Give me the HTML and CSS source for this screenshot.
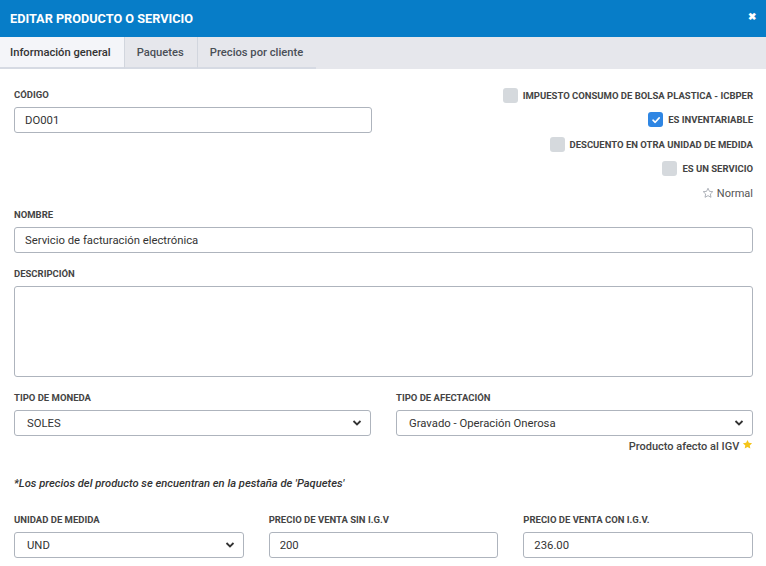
FILE: index.html
```html
<!DOCTYPE html>
<html>
<head>
    <meta charset="UTF-8">
    <title>Editar producto o servicio</title>
    <link rel="stylesheet" href="styles.css">
</head>
<body>
    <div class="modal">
        <div class="modal-header">
            <span class="modal-title">EDITAR PRODUCTO O SERVICIO</span>
            <span class="close">&#10006;</span>
        </div>
        <div class="tabs">
            <div class="tab active">Información general</div>
            <div class="tab">Paquetes</div>
            <div class="tab">Precios por cliente</div>
        </div>
        <div class="modal-body">
            <div class="top-row">
                <div class="field codigo">
                    <label>CÓDIGO</label>
                    <input type="text" value="DO001">
                </div>
                <div class="checks">
                    <div class="check"><span class="box"></span>IMPUESTO CONSUMO DE BOLSA PLASTICA - ICBPER</div>
                    <div class="check"><span class="box on"><svg width="10" height="10" viewBox="0 0 10 10"><path d="M2 5.2 L4.2 7.3 L8.2 2.9" fill="none" stroke="#fff" stroke-width="1.6" stroke-linecap="round" stroke-linejoin="round"/></svg></span>ES INVENTARIABLE</div>
                    <div class="check"><span class="box"></span>DESCUENTO EN OTRA UNIDAD DE MEDIDA</div>
                    <div class="check"><span class="box"></span>ES UN SERVICIO</div>
                    <div class="rating"><svg width="12" height="12" viewBox="0 0 24 24"><path d="M12 2.5l2.9 6.2 6.6.7-4.9 4.6 1.4 6.6L12 17.3l-6 3.3 1.4-6.6-4.9-4.6 6.6-.7z" fill="none" stroke="#9aa0a8" stroke-width="1.6" stroke-linejoin="round"/></svg>Normal</div>
                </div>
            </div>

            <div class="field">
                <label>NOMBRE</label>
                <input type="text" value="Servicio de facturación electrónica">
            </div>

            <div class="field">
                <label>DESCRIPCIÓN</label>
                <textarea></textarea>
            </div>

            <div class="row two">
                <div class="field">
                    <label>TIPO DE MONEDA</label>
                    <div class="select">SOLES<svg width="10" height="8" viewBox="0 0 10 8"><path d="M1.5 2 L5 5.5 L8.5 2" fill="none" stroke="#333" stroke-width="1.8"/></svg></div>
                </div>
                <div class="field">
                    <label>TIPO DE AFECTACIÓN</label>
                    <div class="select">Gravado - Operación Onerosa<svg width="10" height="8" viewBox="0 0 10 8"><path d="M1.5 2 L5 5.5 L8.5 2" fill="none" stroke="#333" stroke-width="1.8"/></svg></div>
                    <div class="hint">Producto afecto al IGV <svg width="11" height="11" viewBox="0 0 24 24"><path d="M12 2l3 6.4 7 .8-5.2 4.8 1.4 6.9L12 17.4l-6.2 3.5 1.4-6.9L2 9.2l7-.8z" fill="#f5c518"/></svg></div>
                </div>
            </div>

            <p class="note">*Los precios del producto se encuentran en la pestaña de 'Paquetes'</p>

            <div class="row three">
                <div class="field">
                    <label>UNIDAD DE MEDIDA</label>
                    <div class="select">UND<svg width="10" height="8" viewBox="0 0 10 8"><path d="M1.5 2 L5 5.5 L8.5 2" fill="none" stroke="#333" stroke-width="1.8"/></svg></div>
                </div>
                <div class="field">
                    <label>PRECIO DE VENTA SIN I.G.V</label>
                    <input type="text" value="200">
                </div>
                <div class="field">
                    <label>PRECIO DE VENTA CON I.G.V.</label>
                    <input type="text" value="236.00">
                </div>
            </div>
        </div>
    </div>
</body>
</html>
```

FILE: styles.css
```css
body {
    margin: 0;
    font-family: Roboto, "Liberation Sans", sans-serif;
    background-color: #ffffff;
    color: #333;
}

.modal {
    width: 766px;
    height: 566px;
    overflow: hidden;
}

.modal-header {
    height: 37px;
    background-color: #077dc8;
    color: white;
    display: flex;
    align-items: center;
    justify-content: space-between;
    padding: 0 10px;
}

.modal-title {
    font-size: 12.7px;
    font-weight: bold;
}

.close {
    font-size: 10px;
    font-weight: bold;
    margin-top: -4px;
}

.tabs {
    display: flex;
    height: 32px;
    background-color: #e6e7ec;
}

.tab {
    font-size: 11.2px;
    font-weight: 500;
    color: #4a4f57;
    padding: 0 13px 0 12px;
    display: flex;
    align-items: center;
    border-right: 1px solid #d2d6de;
    border-bottom: 2px solid #d6dae3;
}

.tab.active {
    background-color: #f4f5f9;
    color: #333;
    padding: 0 13px 0 10px;
}

.tab:last-child {
    border-right: none;
}

.modal-body {
    padding: 20px 13px 0 14px;
}

.top-row {
    display: flex;
    align-items: flex-start;
    justify-content: space-between;
    margin-bottom: 4px;
}

.codigo {
    width: 358px;
}

.field {
    margin-bottom: 15px;
}

label {
    display: block;
    font-size: 9.5px;
    font-weight: bold;
    color: #444;
    margin-bottom: 6px;
    line-height: 12px;
}

input, textarea, .select {
    width: 100%;
    box-sizing: border-box;
    height: 26px;
    border: 1px solid #aeb4bd;
    border-radius: 3px;
    font-family: Roboto, "Liberation Sans", sans-serif;
    font-size: 11.3px;
    color: #333;
    padding: 0 10px;
    background: white;
}

textarea {
    height: 91px;
    resize: none;
    display: block;
}

.select {
    display: flex;
    align-items: center;
    justify-content: space-between;
    padding: 0 8px 0 12px;
}

.checks {
    display: flex;
    flex-direction: column;
    align-items: flex-end;
    margin-top: -6px;
}

.check {
    display: flex;
    align-items: center;
    font-size: 9.5px;
    font-weight: bold;
    color: #444;
    height: 24.5px;
}

.box {
    width: 15px;
    height: 15px;
    border-radius: 3px;
    background-color: #d5d9dd;
    margin-right: 5px;
    display: flex;
    align-items: center;
    justify-content: center;
}

.box.on {
    background-color: #2f86e3;
}

.rating {
    display: flex;
    align-items: center;
    gap: 3px;
    font-size: 11px;
    color: #555;
    height: 24px;
}

.row {
    display: grid;
    gap: 25px;
}

.row.two {
    grid-template-columns: 1fr 1fr;
}

.row.three {
    grid-template-columns: 1fr 1fr 1fr;
}

.hint {
    text-align: right;
    font-size: 11px;
    font-weight: 500;
    color: #444;
    margin-top: 3px;
    line-height: 13px;
}

.note {
    font-size: 11.2px;
    font-style: italic;
    font-weight: 500;
    color: #333;
    line-height: 13px;
    margin: 9px 0 24px;
}
```
